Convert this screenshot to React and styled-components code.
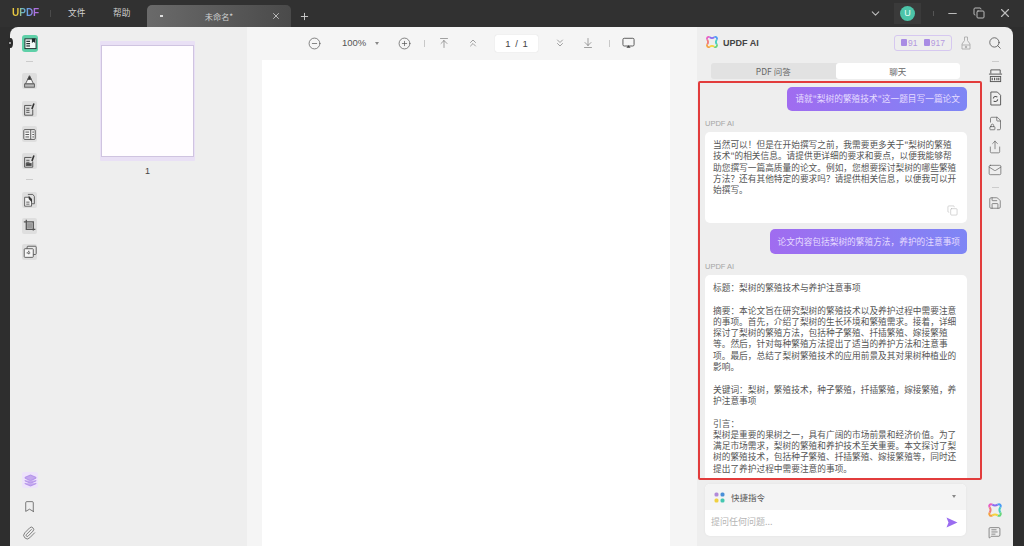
import React from "react";
import styled, { createGlobalStyle } from "styled-components";
import {
  Minus, Plus, X, ChevronDown, ChevronsUp, ChevronsDown, ArrowUpToLine, ArrowDownToLine,
  CirclePlus, CircleMinus, Search, Share, Mail, Save, Copy, Bookmark, Paperclip, Layers,
  MessageSquareText, FileLock2,
} from "lucide-react";

const GlobalStyle = createGlobalStyle`
  html, body { margin: 0; padding: 0; background: #2e2e2e; }
  body { font-family: "Noto Sans CJK SC", "Liberation Sans", sans-serif; overflow: hidden; }
  * { box-sizing: border-box; }
`;

const firstAnswer = `当然可以！但是在开始撰写之前，我需要更多关于"梨树的繁殖
技术"的相关信息。请提供更详细的要求和要点，以便我能够帮
助您撰写一篇高质量的论文。例如，您想要探讨梨树的哪些繁殖
方法？还有其他特定的要求吗？请提供相关信息，以便我可以开
始撰写。`;

const secondAnswer = `标题：梨树的繁殖技术与养护注意事项

摘要：本论文旨在研究梨树的繁殖技术以及养护过程中需要注意
的事项。首先，介绍了梨树的生长环境和繁殖需求。接着，详细
探讨了梨树的繁殖方法，包括种子繁殖、扦插繁殖、嫁接繁殖
等。然后，针对每种繁殖方法提出了适当的养护方法和注意事
项。最后，总结了梨树繁殖技术的应用前景及其对果树种植业的
影响。

关键词：梨树，繁殖技术，种子繁殖，扦插繁殖，嫁接繁殖，养
护注意事项

引言：
梨树是重要的果树之一，具有广阔的市场前景和经济价值。为了
满足市场需求，梨树的繁殖和养护技术至关重要。本文探讨了梨
树的繁殖技术，包括种子繁殖、扦插繁殖、嫁接繁殖等，同时还
提出了养护过程中需要注意的事项。`;

const AiLogo = ({ size = 14 }) => (
  <svg width={size} height={size} viewBox="0 0 24 24" fill="none" strokeWidth="3">
    <path d="M8 4C5 2 2 5 4 8" stroke="#e85dc4" />
    <path d="M8 4c3 2 5 2 8 0" stroke="#8a6cf0" />
    <path d="M16 4c3-2 6 1 4 4" stroke="#4a9cf5" />
    <path d="M20 8c-2 3-2 5 0 8" stroke="#45cfc0" />
    <path d="M20 16c2 3-1 6-4 4" stroke="#66d67a" />
    <path d="M16 20c-3-2-5-2-8 0" stroke="#f5d33f" />
    <path d="M8 20c-3 2-6-1-4-4" stroke="#f5a13f" />
    <path d="M4 16c2-3 2-5 0-8" stroke="#f07a7a" />
  </svg>
);

const ReaderIcon = () => (
  <svg width="13" height="13" viewBox="0 0 14 14" fill="none">
    <rect x="1" y="2" width="12" height="10.5" fill="#f4fbf8" stroke="#1d2b2b" strokeWidth="1" />
    <rect x="2.5" y="4" width="4" height="1.3" fill="#1d2b2b" />
    <rect x="2.5" y="6.5" width="4" height="1.3" fill="#1d2b2b" />
    <rect x="2.5" y="9" width="4" height="1.3" fill="#1d2b2b" />
    <path d="M8.5 1.5h3.5v5l-1.7-1.3-1.8 1.3z" fill="#1d2b2b" />
  </svg>
);

const DocPenIcon = ({ dark }) => (
  <svg width="13" height="15" viewBox="0 0 16 18" fill="none" stroke="#555" strokeWidth="1.2">
    <path d="M10.5 4H2v12h10V9" />
    <path d="M4 7.5h4M4 10h4" />
    {dark ? <rect x="4" y="11.5" width="6" height="2.4" fill="#444" /> : <path d="M4 12.5h4" />}
    <path d="M13.5 1.5l-2.5 7" strokeWidth="2" stroke="#333" />
  </svg>
);

const HighlightIcon = () => (
  <svg width="13" height="15" viewBox="0 0 16 18" fill="none" stroke="#555" strokeWidth="1.1">
    <path d="M8 2L3 12h10z" fill="#f4f4f4" />
    <path d="M8 2L5.8 6.5h4.4z" fill="#333" />
    <rect x="2" y="12" width="12" height="4" fill="#bbb" />
  </svg>
);

const PagesIcon = () => (
  <svg width="13" height="13" viewBox="0 0 16 16" fill="none" stroke="#555" strokeWidth="1.2">
    <rect x="1" y="2" width="14" height="12" rx="1" fill="#f4f4f4" />
    <path d="M9.5 2v12" />
    <path d="M3 5h4.5M3 8h4.5M3 11h4.5" />
    <path d="M11.5 5h2M11.5 8h2M11.5 11h2" />
  </svg>
);

const ExtractIcon = () => (
  <svg width="13" height="15" viewBox="0 0 16 18" fill="none" stroke="#555" strokeWidth="1.1">
    <path d="M6 1.5h6l2 2.5v9h-3" />
    <path d="M2 5h5.5l3 3v8H2z" fill="#f4f4f4" />
    <path d="M7 3l4 4v4l-4-4z" fill="#333" stroke="none" />
    <path d="M4 11h4M4 13.5h4" />
  </svg>
);

const CropIcon = () => (
  <svg width="14" height="14" viewBox="0 0 17 17" fill="none" stroke="#555" strokeWidth="1">
    <path d="M1 3.5h11.5V14" strokeWidth="1.6" />
    <path d="M4 1v11.5h11" strokeWidth="1.6" />
    <rect x="5" y="5" width="6.5" height="6.5" fill="#999" stroke="none" />
  </svg>
);

const OrganizeIcon = () => (
  <svg width="14" height="14" viewBox="0 0 17 17" fill="none" stroke="#555" strokeWidth="1.1">
    <rect x="5" y="1.5" width="11" height="10" rx="1" fill="#e8e8e8" />
    <rect x="1.5" y="4.5" width="11" height="10.5" rx="1" fill="#f6f6f6" />
    <path d="M7 7v5M4.5 9.5h5" strokeWidth="1.4" strokeDasharray="1.4 1" />
  </svg>
);

const OcrIcon = () => (
  <svg width="15" height="15" viewBox="0 0 16 16" fill="none" stroke="#555" strokeWidth="1">
    <path d="M3 6V2h10v4" />
    <path d="M1 6.5h14" />
    <rect x="2.5" y="9" width="11" height="5.5" />
    <path d="M4.5 10.5v2.5M7 10.5v2.5M9.5 10.5v2.5M11.5 10.5v2.5" strokeWidth="1.2" />
  </svg>
);

const ConvertIcon = () => (
  <svg width="13" height="15" viewBox="0 0 14 16" fill="none" stroke="#555" strokeWidth="1">
    <path d="M2 1h7l3.5 3.5V15H2z" />
    <path d="M9 6.5A2.6 2.6 0 0 0 4.6 8M5 10.5A2.6 2.6 0 0 0 9.4 9" strokeWidth="1.1" />
  </svg>
);

const PresentIcon = () => (
  <svg width="13" height="12" viewBox="0 0 15 14" fill="none" stroke="#555" strokeWidth="1.1">
    <rect x="1" y="1.5" width="13" height="9" rx="1.5" />
    <path d="M5 12.5h5L7.5 9.5z" fill="#444" stroke="none" />
  </svg>
);

const BottleIcon = () => (
  <svg width="10" height="14" viewBox="0 0 10 14" fill="none" stroke="#aaa" strokeWidth="0.9">
    <path d="M3.5 1h3v3.5L9 8v5H1V8l2.5-3.5z" />
    <path d="M1 9h8" />
    <circle cx="5" cy="11" r="0.8" fill="#aaa" />
  </svg>
);

const Send = () => (
  <svg width="12" height="11" viewBox="0 0 12 11">
    <path d="M0.5 0.5L11.5 5.5 0.5 10.5 2.5 5.5z" fill="#9a6cf0" />
  </svg>
);

const SpaceTiles = () => (
  <svg width="11" height="11" viewBox="0 0 11 11">
    <rect x="0.5" y="0.5" width="4" height="4" rx="1.5" fill="#b28ad8" />
    <rect x="6.5" y="0.5" width="4" height="4" rx="1.5" fill="#4a8fd8" />
    <rect x="0.5" y="6.5" width="4" height="4" rx="1.5" fill="#f0d040" />
    <rect x="6.5" y="6.5" width="4" height="4" rx="1.5" fill="#45c7b0" />
  </svg>
);

const Page = styled.div`
  position: relative;
  width: 1024px;
  height: 546px;
  background: #2e2e2e;
  overflow: hidden;
`;

const TitleBar = styled.header`
  position: absolute;
  inset: 0 0 auto 0;
  height: 27px;
  background: #313131;
  color: #d0d0d0;
`;

const Logo = styled.div`
  position: absolute;
  left: 12px;
  top: 6px;
  font: 700 10px/14px "Liberation Sans", sans-serif;
  background: linear-gradient(90deg, #e8c840 0 24%, #68b8c0 36%, #6c9ce8 62%, #b070e0 85%);
  -webkit-background-clip: text;
  background-clip: text;
  color: transparent;
`;

const MenuItem = styled.span`
  position: absolute;
  left: ${(p) => p.$x}px;
  top: 6px;
  font-size: 8.7px;
  line-height: 14px;
`;

const Tab = styled.div`
  position: absolute;
  left: 147px;
  top: 5px;
  width: 144px;
  height: 22px;
  border-radius: 5px 5px 0 0;
  background: linear-gradient(90deg, #6a6a6a 0%, #5a5a5a 50%, #4a4a4a 100%);
  color: #cfcfcf;
  font-size: 8.2px;
  line-height: 22px;
  text-align: center;
`;

const TabDot = styled.span`
  position: absolute;
  left: 13px;
  top: 10px;
  width: 3px;
  height: 2px;
  background: #ddd;
`;

const IconSlot = styled.span`
  position: absolute;
  left: ${(p) => p.$x}px;
  top: ${(p) => p.$y}px;
  display: flex;
  align-items: center;
  justify-content: center;
  color: ${(p) => p.$color || "#4a4a4a"};
`;

const Avatar = styled.span`
  position: absolute;
  left: 900px;
  top: 6px;
  width: 15px;
  height: 15px;
  border-radius: 50%;
  background: #4cc4a8;
  color: #e8fff8;
  font: 9px/15px "Liberation Sans", sans-serif;
  text-align: center;
`;

const AvatarBack = styled.span`
  position: absolute;
  left: 894px;
  top: 3px;
  width: 27px;
  height: 21px;
  background: #3a3a3a;
`;

const Divider = styled.span`
  position: absolute;
  left: ${(p) => p.$x}px;
  top: ${(p) => p.$y}px;
  width: ${(p) => p.$w || 1}px;
  height: ${(p) => p.$h || 1}px;
  background: ${(p) => p.$color || "#c8c8c8"};
`;

const Shell = styled.main`
  position: absolute;
  left: 10px;
  top: 27px;
  width: 1003px;
  height: 519px;
  background: #eeeeee;
  border-radius: 8px 8px 0 0;
  overflow: hidden;
`;

const Handle = styled.span`
  position: absolute;
  left: 8px;
  top: 38px;
  width: 5px;
  height: 10px;
  border-radius: 50%;
  background: #2a2a2a;
  z-index: 2;
`;

const HandleDot = styled.span`
  position: absolute;
  left: 1px;
  top: 4px;
  width: 2px;
  height: 2px;
  border-radius: 50%;
  background: #bbb;
`;

const ToolSlot = styled.span`
  position: absolute;
  left: 12px;
  top: ${(p) => p.$y}px;
  width: 15px;
  height: 16px;
  display: flex;
  align-items: center;
  justify-content: center;
  background: #dedede;
  border-radius: 2px;
`;

const ReaderButton = styled.span`
  position: absolute;
  left: 12px;
  top: 8px;
  width: 16px;
  height: 17px;
  border-radius: 3px;
  background: #5fd0a8;
  display: flex;
  align-items: center;
  justify-content: center;
`;

const LayerButton = styled.span`
  position: absolute;
  left: 12px;
  top: 445px;
  width: 16px;
  height: 16px;
  border-radius: 2px;
  background: #eee3fb;
  display: flex;
  align-items: center;
  justify-content: center;
  color: #b595ea;
`;

const Thumb = styled.div`
  position: absolute;
  left: 90px;
  top: 14px;
  width: 95px;
  height: 120px;
  background: #e9e0f5;
  border-radius: 1px;
`;

const ThumbPaper = styled.div`
  position: absolute;
  left: 1px;
  top: 4px;
  width: 93px;
  height: 112px;
  background: #fffdff;
  border: 1px solid #cfc4e0;
`;

const ThumbLabel = styled.span`
  position: absolute;
  left: 90px;
  top: 137px;
  width: 95px;
  text-align: center;
  font: 9px/14px "Liberation Sans", sans-serif;
  color: #444;
`;

const ReadingArea = styled.div`
  position: absolute;
  left: 237px;
  top: 0;
  width: 450px;
  height: 519px;
  background: #f5f5f5;
`;

const Sheet = styled.div`
  position: absolute;
  left: 15px;
  top: 33px;
  width: 408px;
  height: 486px;
  background: #fff;
`;

const ZoomText = styled.span`
  position: absolute;
  left: 332px;
  top: 9px;
  font: 9.5px/14px "Liberation Sans", sans-serif;
  color: #555;
`;

const Caret = styled.span`
  position: absolute;
  left: ${(p) => p.$x}px;
  top: ${(p) => p.$y}px;
  width: 0;
  height: 0;
  border-left: 2.5px solid transparent;
  border-right: 2.5px solid transparent;
  border-top: 3.5px solid #888;
`;

const PageInput = styled.div`
  position: absolute;
  left: 485px;
  top: 8px;
  width: 43px;
  height: 17px;
  background: #fff;
  border-radius: 2px;
  box-shadow: 0 0 1px #ccc;
  font: 9.5px/17px "Liberation Sans", sans-serif;
  word-spacing: 2px;
  color: #444;
  text-align: center;
`;

const AiPanel = styled.aside`
  position: absolute;
  left: 687px;
  top: 0;
  width: 279px;
  height: 519px;
  background: #eeeeee;
`;

const AiTitle = styled.span`
  position: absolute;
  left: 26px;
  top: 9px;
  font: 700 9px/14px "Liberation Sans", sans-serif;
  color: #444;
`;

const QuotaBadge = styled.div`
  position: absolute;
  left: 197px;
  top: 8px;
  width: 58px;
  height: 16px;
  border: 1px solid #d6c8f0;
  border-radius: 3px;
  display: flex;
  align-items: center;
  justify-content: space-evenly;
  font: 8.5px/14px "Liberation Sans", sans-serif;
  color: #b49ae0;
`;

const QuotaMark = styled.b`
  display: inline-block;
  width: 6px;
  height: 7px;
  margin-right: 1px;
  background: #a98ce4;
  border-radius: 1px;
`;

const Segments = styled.div`
  position: absolute;
  left: 14px;
  top: 36px;
  width: 249px;
  height: 16px;
  background: #e2e2e2;
  border-radius: 3px;
  display: flex;
  font-size: 8.5px;
  line-height: 16px;
  color: #666;
  text-align: center;
`;

const Segment = styled.div`
  flex: 1;
  background: ${(p) => (p.$active ? "#fff" : "transparent")};
  border-radius: 3px;
`;

const UserBubble = styled.div`
  position: absolute;
  right: 9px;
  top: ${(p) => p.$y}px;
  height: ${(p) => p.$h}px;
  padding: 0 7px 0 8px;
  border-radius: 5px;
  background: linear-gradient(90deg, #a06cf0 0%, #7e86f5 100%);
  color: #e6dcff;
  font-size: 8.7px;
  line-height: ${(p) => p.$h}px;
  white-space: nowrap;
`;

const SenderLabel = styled.span`
  position: absolute;
  left: 8px;
  top: ${(p) => p.$y}px;
  font: 7.5px/10px "Liberation Sans", sans-serif;
  color: #a5a5a5;
`;

const AnswerCard = styled.div`
  position: absolute;
  left: 8px;
  top: ${(p) => p.$y}px;
  width: 262px;
  height: ${(p) => p.$h}px;
  padding: 7px 8px;
  background: #fff;
  border-radius: ${(p) => (p.$open ? "5px 5px 0 0" : "5px")};
  color: #555;
  font-size: 8.7px;
  line-height: 11.3px;
  white-space: pre;
  overflow: hidden;
`;

const CopyMark = styled.span`
  position: absolute;
  right: 9px;
  bottom: 7px;
  color: #b5b5b5;
  display: flex;
`;

const Highlight = styled.div`
  position: absolute;
  left: 688px;
  top: 54px;
  width: 284px;
  height: 399px;
  border: 2px solid #e23c3c;
  border-radius: 2px;
  pointer-events: none;
  z-index: 3;
`;

const Composer = styled.div`
  position: absolute;
  left: 8px;
  top: 457px;
  width: 261px;
  height: 52px;
  background: #fff;
  border-radius: 5px;
  overflow: hidden;
  box-shadow: 0 0 3px rgba(0, 0, 0, 0.05);
`;

const ShortcutRow = styled.div`
  height: 26px;
  background: #f4f4f4;
  display: flex;
  align-items: center;
  padding-left: 9px;
  gap: 6px;
  font-size: 8.5px;
  color: #555;
`;

const AskPlaceholder = styled.span`
  position: absolute;
  left: 6px;
  top: 31px;
  font-size: 9px;
  line-height: 14px;
  color: #b5b5b5;
`;

const App = () => (
  <Page>
    <GlobalStyle />
    <TitleBar>
      <Logo>UPDF</Logo>
      <Divider $x={50} $y={10} $h={7} $color="#4a4a4a" />
      <MenuItem $x={68}>文件</MenuItem>
      <MenuItem $x={113}>帮助</MenuItem>
      <Tab>
        <TabDot />
        未命名*
        <IconSlot $x={124} $y={6} $color="#d0d0d0"><X size={10} /></IconSlot>
      </Tab>
      <IconSlot $x={299} $y={11} $color="#d0d0d0"><Plus size={11} /></IconSlot>
      <IconSlot $x={869} $y={7} $color="#bbb"><ChevronDown size={13} /></IconSlot>
      <AvatarBack />
      <Avatar>U</Avatar>
      <Divider $x={933} $y={11} $h={5} $color="#555" />
      <IconSlot $x={946} $y={7} $color="#bbb"><Minus size={13} /></IconSlot>
      <IconSlot $x={973} $y={7} $color="#bbb"><Copy size={12} /></IconSlot>
      <IconSlot $x={998} $y={6} $color="#bbb"><X size={14} /></IconSlot>
    </TitleBar>

    <Handle><HandleDot /></Handle>

    <Shell>
      <ReaderButton><ReaderIcon /></ReaderButton>
      <Divider $x={16} $y={34} $w={7} $color="#ccc" />
      <ToolSlot $y={46}><HighlightIcon /></ToolSlot>
      <ToolSlot $y={74}><DocPenIcon /></ToolSlot>
      <ToolSlot $y={99}><PagesIcon /></ToolSlot>
      <ToolSlot $y={126}><DocPenIcon dark /></ToolSlot>
      <Divider $x={16} $y={152} $w={7} $color="#ccc" />
      <ToolSlot $y={165}><ExtractIcon /></ToolSlot>
      <ToolSlot $y={191}><CropIcon /></ToolSlot>
      <ToolSlot $y={217}><OrganizeIcon /></ToolSlot>
      <LayerButton><Layers size={13} fill="#c4a8ee" /></LayerButton>
      <IconSlot $x={13} $y={473} $color="#555"><Bookmark size={13} strokeWidth={1.4} /></IconSlot>
      <IconSlot $x={12} $y={499} $color="#666"><Paperclip size={14} strokeWidth={1.4} /></IconSlot>

      <Thumb><ThumbPaper /></Thumb>
      <ThumbLabel>1</ThumbLabel>

      <ReadingArea>
        <Sheet />
      </ReadingArea>

      <IconSlot $x={298} $y={10} $color="#555"><CircleMinus size={13} strokeWidth={1.3} /></IconSlot>
      <ZoomText>100%</ZoomText>
      <Caret $x={365} $y={15} />
      <IconSlot $x={388} $y={10} $color="#555"><CirclePlus size={13} strokeWidth={1.3} /></IconSlot>
      <Divider $x={414} $y={13} $h={7} />
      <IconSlot $x={428} $y={10} $color="#666"><ArrowUpToLine size={12} strokeWidth={1.2} /></IconSlot>
      <IconSlot $x={457} $y={10} $color="#666"><ChevronsUp size={12} strokeWidth={1.2} /></IconSlot>
      <PageInput>1 / 1</PageInput>
      <IconSlot $x={544} $y={10} $color="#666"><ChevronsDown size={12} strokeWidth={1.2} /></IconSlot>
      <IconSlot $x={572} $y={10} $color="#666"><ArrowDownToLine size={12} strokeWidth={1.2} /></IconSlot>
      <Divider $x={599} $y={13} $h={7} />
      <IconSlot $x={612} $y={10}><PresentIcon /></IconSlot>

      <AiPanel>
        <IconSlot $x={8} $y={8}><AiLogo size={14} /></IconSlot>
        <AiTitle>UPDF AI</AiTitle>
        <QuotaBadge>
          <span><QuotaMark />91</span>
          <span><QuotaMark />917</span>
        </QuotaBadge>
        <IconSlot $x={264} $y={9}><BottleIcon /></IconSlot>
        <Segments>
          <Segment>PDF 问答</Segment>
          <Segment $active>聊天</Segment>
        </Segments>
        <UserBubble $y={60} $h={24}>请就"梨树的繁殖技术"这一题目写一篇论文</UserBubble>
        <SenderLabel $y={92}>UPDF AI</SenderLabel>
        <AnswerCard $y={105} $h={91}>
          {firstAnswer}
          <CopyMark><Copy size={11} strokeWidth={1.2} /></CopyMark>
        </AnswerCard>
        <UserBubble $y={202} $h={25}>论文内容包括梨树的繁殖方法，养护的注意事项</UserBubble>
        <SenderLabel $y={235}>UPDF AI</SenderLabel>
        <AnswerCard $y={248} $h={204} $open>{secondAnswer}</AnswerCard>
        <Composer>
          <ShortcutRow><SpaceTiles />快捷指令</ShortcutRow>
          <Caret $x={247} $y={11} />
          <AskPlaceholder>提问任何问题...</AskPlaceholder>
          <IconSlot $x={241} $y={33}><Send /></IconSlot>
        </Composer>
      </AiPanel>
      <Highlight />

      <IconSlot $x={978} $y={9} $color="#555"><Search size={14} strokeWidth={1.4} /></IconSlot>
      <Divider $x={982} $y={34} $w={7} $color="#ccc" />
      <IconSlot $x={978} $y={41}><OcrIcon /></IconSlot>
      <IconSlot $x={979} $y={64}><ConvertIcon /></IconSlot>
      <IconSlot $x={978} $y={89} $color="#555"><FileLock2 size={15} strokeWidth={1.1} /></IconSlot>
      <IconSlot $x={978} $y={113} $color="#555"><Share size={14} strokeWidth={1.1} /></IconSlot>
      <IconSlot $x={978} $y={136} $color="#555"><Mail size={14} strokeWidth={1.1} /></IconSlot>
      <Divider $x={982} $y={160} $w={7} $color="#ccc" />
      <IconSlot $x={978} $y={169} $color="#555"><Save size={14} strokeWidth={1.1} /></IconSlot>
      <IconSlot $x={977} $y={475}><AiLogo size={16} /></IconSlot>
      <IconSlot $x={978} $y={499} $color="#555"><MessageSquareText size={13} strokeWidth={1.2} /></IconSlot>
    </Shell>
  </Page>
);

export default App;
